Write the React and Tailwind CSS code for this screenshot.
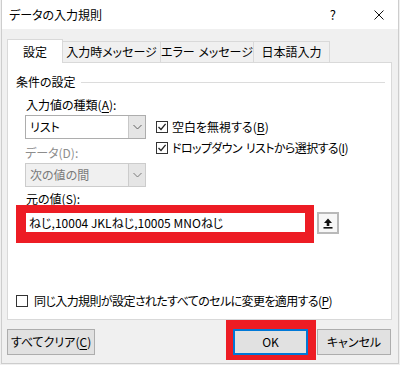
import React from "react";

const U = ({ c }) => <span className="underline underline-offset-2 decoration-1">{c}</span>;

function Check({ checked }) {
  return (
    <span className="w-[12px] h-[12px] border border-[#333333] bg-white flex items-center justify-center shrink-0">
      {checked && (
        <svg width="10" height="10" viewBox="0 0 10 10">
          <path d="M1.5 5 L4 7.5 L8.6 1.8" fill="none" stroke="#222" strokeWidth="1.3" />
        </svg>
      )}
    </span>
  );
}

function Chevron({ color = "#606060" }) {
  return (
    <svg width="9" height="6" viewBox="0 0 9 6">
      <path d="M0.5 1 L4.5 5 L8.5 1" fill="none" stroke={color} strokeWidth="1" />
    </svg>
  );
}

export default function App() {
  return (
    <div className="w-[400px] h-[365px] bg-[#f0f0f0] overflow-hidden font-['Noto_Sans_CJK_JP','Noto_Sans',sans-serif] [font-feature-settings:'palt'] text-[12px] text-black whitespace-nowrap">
      <div className="ml-[1px] w-[398px] h-[364px] border-l border-r border-b border-[#cdcdcd] flex flex-col">
        {/* Title bar */}
        <div className="h-[29px] bg-white flex items-center pl-[7px] shrink-0">
          <span className="leading-[16px]">データの入力規則</span>
          <span className="ml-auto leading-[16px] text-[13px]">?</span>
          <svg className="ml-[38px] mr-[14px]" width="10" height="10" viewBox="0 0 10 10">
            <path d="M0.5 0.5 L9.5 9.5 M9.5 0.5 L0.5 9.5" stroke="#111" strokeWidth="1" />
          </svg>
        </div>

        {/* Tabs */}
        <div className="mt-[10px] h-[23px] flex items-end pl-[5px] shrink-0">
          <div className="relative z-10 -mb-px h-[24px] w-[56px] bg-white border border-b-0 border-[#d9d9d9] flex items-center justify-center leading-[16px]">
            設定
          </div>
          <div className="h-[21px] w-[98px] border border-l-0 border-b-0 border-[#d9d9d9] flex items-center justify-center leading-[16px]">
            入力時メッセージ
          </div>
          <div className="h-[21px] w-[93px] border border-l-0 border-b-0 border-[#d9d9d9] flex items-center justify-center leading-[16px]">
            エラー<span className="inline-block w-[4px]" />メッセージ
          </div>
          <div className="h-[21px] w-[76px] border border-l-0 border-b-0 border-[#d9d9d9] flex items-center justify-center leading-[16px]">
            日本語入力
          </div>
        </div>

        {/* Panel */}
        <div className="ml-[5px] w-[385px] h-[258px] bg-white border border-[#d9d9d9] flex flex-col shrink-0">
          <div className="mt-[11px] pl-[8px] flex items-center leading-[16px]">
            <span>条件の設定</span>
            <div className="flex-1 h-px bg-[#dcdcdc] ml-[5px] mr-[6px]" />
          </div>

          <div className="mt-[7px] pl-[18px] leading-[16px]">
            入力値の種類(<U c="A" />):
          </div>

          <div className="mt-[2px] flex">
            <div className="ml-[17px] w-[121px] flex flex-col">
              <div className="h-[24px] border border-[#adadad] bg-white flex">
                <span className="flex-1 pl-[4px] leading-[22px]">リスト</span>
                <span className="w-[17px] bg-[#e5e5e5] border-l border-[#c8c8c8] flex items-center justify-center">
                  <Chevron />
                </span>
              </div>
              <div className="mt-[6px] leading-[16px] text-[#8d8d8d]">データ(D):</div>
              <div className="mt-[2px] h-[24px] border border-[#cccccc] bg-[#f0f0f0] flex">
                <span className="flex-1 pl-[4px] leading-[22px] text-[#7a7a7a]">次の値の間</span>
                <span className="w-[17px] bg-[#e5e5e5] border-l border-[#cccccc] flex items-center justify-center">
                  <Chevron color="#7a7a7a" />
                </span>
              </div>
            </div>
            <div className="ml-[10px] pt-[4px] flex flex-col gap-[5px]">
              <div className="flex items-center leading-[16px]">
                <Check checked />
                <span className="ml-[4px]">
                  空白を無視する(<U c="B" />)
                </span>
              </div>
              <div className="flex items-center leading-[16px]">
                <Check checked />
                <span className="ml-[4px] tracking-[-0.6px]">
                  ドロップダウン<span className="inline-block w-[4px]" />リストから選択する(<U c="I" />)
                </span>
              </div>
            </div>
          </div>

          <div className="mt-[4px] pl-[18px] leading-[16px]">
            元の値(<U c="S" />):
          </div>

          <div className="-mt-[2px] ml-[8px] flex items-start">
            <div className="w-[298px] h-[38px] bg-[#ed1c24] pl-[10px] pt-[8px]">
              <div className="w-[279px] h-[19px] bg-white pl-[3px] leading-[19px] overflow-hidden">
                ねじ,10004 JKLねじ,10005 MNOねじ
              </div>
            </div>
            <div className="ml-[3px] mt-[7px] w-[22px] h-[22px] border-2 border-[#b9b9b9] bg-[#f7f7f7] flex items-center justify-center">
              <svg width="10" height="11" viewBox="0 0 10 11">
                <path d="M5 0.5 L9 5 H6.3 V8 H3.7 V5 H1 Z" fill="#111" />
                <rect x="0.5" y="9" width="9" height="1.6" fill="#111" />
              </svg>
            </div>
          </div>

          <div className="mt-[50px] pl-[8px] flex items-center leading-[16px]">
            <Check />
            <span className="ml-[6px] tracking-[-0.6px]">
              同じ入力規則が設定されたすべてのセルに変更を適用する(<U c="P" />)
            </span>
          </div>
        </div>

        {/* Buttons */}
        <div className="flex items-start shrink-0">
          <div className="ml-[5px] mt-[9px] w-[88px] h-[26px] bg-[#e1e1e1] border border-[#adadad] flex items-center justify-center leading-[16px]">
            すべてクリア(<U c="C" />)
          </div>
          <div className="ml-[131px] w-[90px] h-[40px] bg-[#ed1c24] pl-[7px] pt-[9px]">
            <div className="w-[75px] h-[26px] bg-[#e1e1e1] border-2 border-[#0078d7] flex items-center justify-center leading-[16px]">
              OK
            </div>
          </div>
          <div className="ml-[1px] mt-[9px] w-[74px] h-[26px] bg-[#e1e1e1] border border-[#adadad] flex items-center justify-center leading-[16px]">
            キャンセル
          </div>
        </div>
      </div>
    </div>
  );
}
